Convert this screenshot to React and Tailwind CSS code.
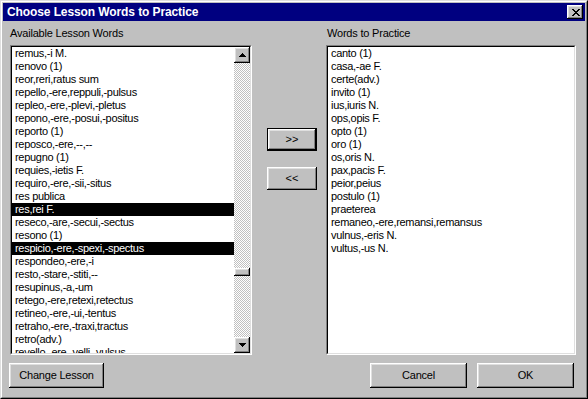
import React from "react";

const leftItems = [
  "remus,-i M.",
  "renovo (1)",
  "reor,reri,ratus sum",
  "repello,-ere,reppuli,-pulsus",
  "repleo,-ere,-plevi,-pletus",
  "repono,-ere,-posui,-positus",
  "reporto (1)",
  "reposco,-ere,--,--",
  "repugno (1)",
  "requies,-ietis F.",
  "requiro,-ere,-sii,-situs",
  "res publica",
  "res,rei F.",
  "reseco,-are,-secui,-sectus",
  "resono (1)",
  "respicio,-ere,-spexi,-spectus",
  "respondeo,-ere,-i",
  "resto,-stare,-stiti,--",
  "resupinus,-a,-um",
  "retego,-ere,retexi,retectus",
  "retineo,-ere,-ui,-tentus",
  "retraho,-ere,-traxi,tractus",
  "retro(adv.)",
  "revello,-ere,-velli,-vulsus",
];
const selected = [12, 15];

const rightItems = [
  "canto (1)",
  "casa,-ae F.",
  "certe(adv.)",
  "invito (1)",
  "ius,iuris N.",
  "ops,opis F.",
  "opto (1)",
  "oro (1)",
  "os,oris N.",
  "pax,pacis F.",
  "peior,peius",
  "postulo (1)",
  "praeterea",
  "remaneo,-ere,remansi,remansus",
  "vulnus,-eris N.",
  "vultus,-us N.",
];

const raised =
  "bg-[#c0c0c0] shadow-[inset_-1px_-1px_#000,inset_1px_1px_#fff,inset_-2px_-2px_#808080,inset_2px_2px_#dfdfdf]";

function Arrow({ down }) {
  return (
    <svg width="7" height="4" viewBox="0 0 7 4" shapeRendering="crispEdges" className="block">
      {down ? (
        <g fill="#000">
          <rect x="0" y="0" width="7" height="1" />
          <rect x="1" y="1" width="5" height="1" />
          <rect x="2" y="2" width="3" height="1" />
          <rect x="3" y="3" width="1" height="1" />
        </g>
      ) : (
        <g fill="#000">
          <rect x="3" y="0" width="1" height="1" />
          <rect x="2" y="1" width="3" height="1" />
          <rect x="1" y="2" width="5" height="1" />
          <rect x="0" y="3" width="7" height="1" />
        </g>
      )}
    </svg>
  );
}

function CloseX() {
  const rows = [
    [0, 2, 6, 2],
    [1, 2, 5, 2],
    [2, 4],
    [3, 2],
    [2, 4],
    [1, 2, 5, 2],
    [0, 2, 6, 2],
  ];
  return (
    <svg width="8" height="7" viewBox="0 0 8 7" shapeRendering="crispEdges" className="block">
      <g fill="#000">
        {rows.map((r, y) => (
          <React.Fragment key={y}>
            <rect x={r[0]} y={y} width={r[1]} height="1" />
            {r.length > 2 && <rect x={r[2]} y={y} width={r[3]} height="1" />}
          </React.Fragment>
        ))}
      </g>
    </svg>
  );
}

function Sunken({ className, children }) {
  return (
    <div
      className={`border border-t-[#808080] border-l-[#808080] border-r-white border-b-white ${className}`}
    >
      <div className="w-full h-full border border-t-black border-l-black border-r-[#dfdfdf] border-b-[#dfdfdf] flex overflow-hidden">
        {children}
      </div>
    </div>
  );
}

function Item({ text, sel }) {
  return (
    <div
      className={`h-[13px] leading-[13px] pl-[3px] whitespace-nowrap tracking-[-0.3px] ${
        sel ? "bg-black text-white" : "text-black"
      }`}
    >
      {text}
    </div>
  );
}

export default function App() {
  return (
    <div className="w-[588px] h-[399px] bg-[#c0c0c0] border border-t-[#dfdfdf] border-l-[#dfdfdf] border-r-black border-b-black font-['Liberation_Sans',Arial,sans-serif] text-[11px] text-black overflow-hidden">
      <div className="w-full h-full border border-t-white border-l-white border-r-[#808080] border-b-[#808080] p-px flex flex-col">
        {/* Title bar */}
        <div className="h-[18px] bg-[#000080] flex items-center pl-[4px] pr-[2px] shrink-0">
          <span className="flex-1 text-white font-bold text-[12px] leading-[18px] tracking-[-0.1px] whitespace-nowrap">
            Choose Lesson Words to Practice
          </span>
          <div className={`w-[16px] h-[14px] flex items-center justify-center pl-px ${raised}`}>
            <CloseX />
          </div>
        </div>

        {/* Main area */}
        <div className="flex pl-[7px] pt-[6px]">
          {/* Left column */}
          <div className="w-[242px] flex flex-col">
            <div className="h-[13px] leading-[13px] tracking-[-0.2px] whitespace-nowrap">
              Available Lesson Words
            </div>
            <Sunken className="mt-[5px] h-[310px] w-[242px]">
              <div className="flex-1 bg-white overflow-hidden flex flex-col">
                {leftItems.map((t, i) => (
                  <Item key={i} text={t} sel={selected.includes(i)} />
                ))}
              </div>
              <div className="w-[16px] flex flex-col shrink-0">
                <div className={`h-[16px] flex items-center justify-center ${raised}`}>
                  <Arrow />
                </div>
                <div className="flex-1 flex flex-col bg-[image:repeating-conic-gradient(#c0c0c0_0_25%,#ffffff_0_50%)] bg-[length:2px_2px]">
                  <div className="h-[205px]" />
                  <div className={`h-[8px] ${raised}`} />
                </div>
                <div className={`h-[16px] flex items-center justify-center ${raised}`}>
                  <Arrow down />
                </div>
              </div>
            </Sunken>
          </div>

          {/* Middle column */}
          <div className="w-[74px] pl-[15px] pt-[101px] flex flex-col">
            <div className="w-[50px] h-[23px] border border-black">
              <div className={`w-full h-full flex items-center justify-center ${raised}`}>
                <span className="leading-none">&gt;&gt;</span>
              </div>
            </div>
            <div className={`mt-[16px] w-[50px] h-[23px] flex items-center justify-center ${raised}`}>
              <span className="leading-none">&lt;&lt;</span>
            </div>
          </div>

          {/* Right column */}
          <div className="w-[250px] flex flex-col">
            <div className="h-[13px] leading-[13px] pl-px tracking-[-0.2px] whitespace-nowrap">
              Words to Practice
            </div>
            <Sunken className="mt-[5px] h-[310px] w-[250px]">
              <div className="flex-1 bg-white overflow-hidden flex flex-col">
                {rightItems.map((t, i) => (
                  <Item key={i} text={t} />
                ))}
              </div>
            </Sunken>
          </div>
        </div>

        {/* Bottom buttons */}
        <div className="flex pl-[6px] mt-[8px]">
          <div className={`w-[95px] h-[25px] flex items-center justify-center tracking-[-0.2px] ${raised}`}>
            Change Lesson
          </div>
          <div className={`ml-[266px] w-[97px] h-[25px] flex items-center justify-center tracking-[-0.2px] ${raised}`}>
            Cancel
          </div>
          <div className={`ml-[10px] w-[97px] h-[25px] flex items-center justify-center tracking-[-0.2px] ${raised}`}>
            OK
          </div>
        </div>
      </div>
    </div>
  );
}
